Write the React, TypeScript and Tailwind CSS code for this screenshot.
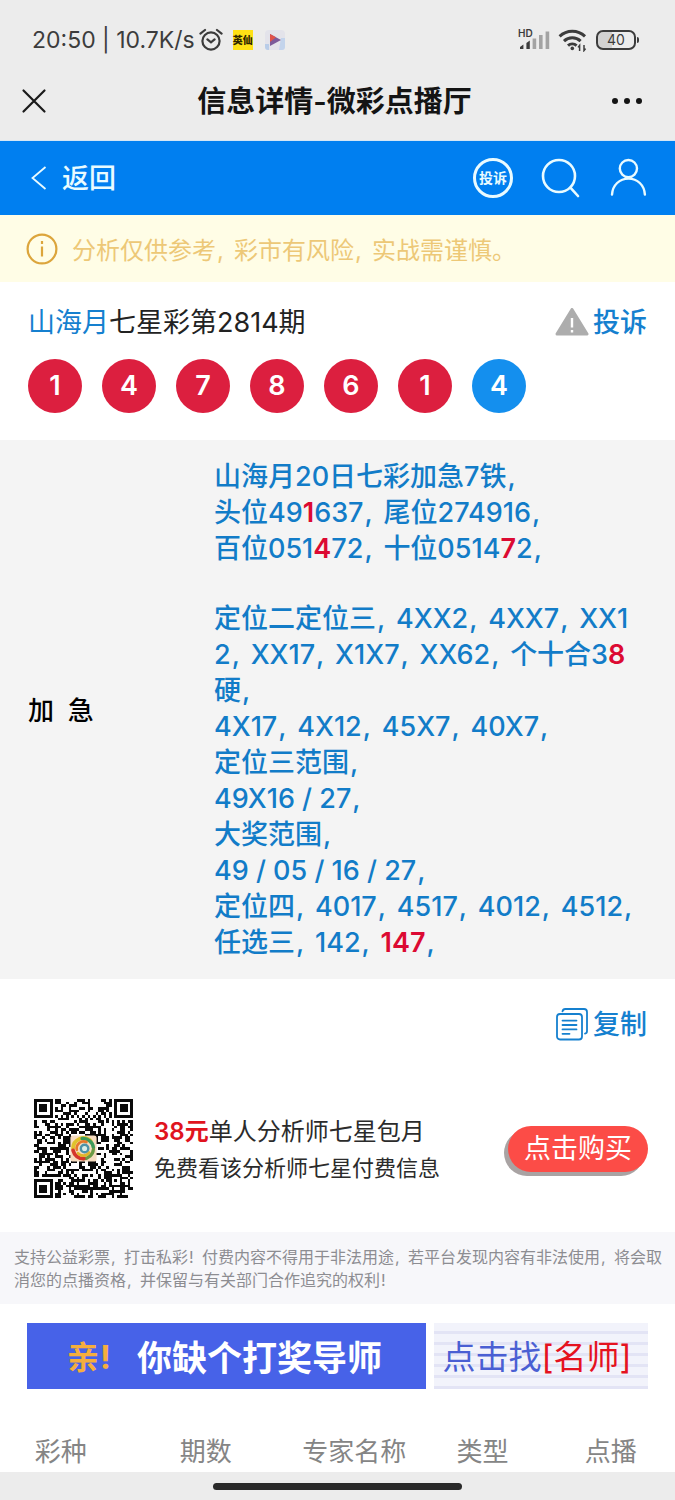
import React from 'react';

type Part = string | { hit: string };

// Each entry is one printed line, "hit" marks the winning digits
const forecast: Part[][] = [
    ['山海月20日七彩加急7铁,'],
    ['头位49', { hit: '1' }, '637,尾位274916,'],
    ['百位051', { hit: '4' }, '72,十位0514', { hit: '7' }, '2,'],
    [],
    ['定位二定位三,4XX2,4XX7,XX1'],
    ['2,XX17,X1X7,XX62,个十合3', { hit: '8' }],
    ['硬,'],
    ['4X17,4X12,45X7,40X7,'],
    ['定位三范围,'],
    ['49X16 / 27,'],
    ['大奖范围,'],
    ['49 / 05 / 16 / 27,'],
    ['定位四,4017,4517,4012,4512,'],
    ['任选三,142,', { hit: '147' }, ','],
];

const balls = [1, 4, 7, 8, 6, 1, 4];

const columns = [
    { label: '彩种', width: 'w-[18%]' },
    { label: '期数', width: 'w-[25%]' },
    { label: '专家名称', width: 'w-[19%]' },
    { label: '类型', width: 'w-[19%]' },
    { label: '点播', width: 'w-[19%]' },
];

interface TextProps {
    text: string;
    mark: string;
}

// Commas and exclamation marks get a fixed advance between the characters
const Text: React.FC<TextProps> = ({ text, mark }) => (
    <>
        {text.split(/([,!])/).map((piece, i) =>
            piece === ',' || piece === '!' ? (
                <span key={i} className={`inline-block pl-px whitespace-nowrap ${mark}`}>{piece}</span>
            ) : (
                piece
            )
        )}
    </>
);

const QR_SIZE = 37;

const finderModule = (x: number, y: number) => {
    const ring = Math.max(Math.abs(x - 3), Math.abs(y - 3));
    return ring === 3 || ring <= 1;
};

const buildQrPath = () => {
    let seed = 20814;
    let d = '';
    for (let y = 0; y < QR_SIZE; y++) {
        for (let x = 0; x < QR_SIZE; x++) {
            seed = (seed * 1103515245 + 12345) % 2147483648;
            let on = seed / 2147483648 > 0.48;
            const fx = x > 28 ? x - 30 : x;
            const fy = y > 28 ? y - 30 : y;
            const inFinder = fx <= 7 && fy <= 7 && !(x > 28 && y > 28);
            if (inFinder) {
                on = fx >= 0 && fy >= 0 && fx < 7 && fy < 7 && finderModule(fx, fy);
            } else if (x >= 28 && x <= 32 && y >= 28 && y <= 32) {
                const ring = Math.max(Math.abs(x - 30), Math.abs(y - 30));
                on = ring !== 1;
            } else if (x === 6 || y === 6) {
                on = (x + y) % 2 === 0;
            }
            if (on) d += `M${x} ${y}h1v1h-1z`;
        }
    }
    return d;
};

const qrPath = buildQrPath();

const QrCode = () => (
    <svg className="w-[99px] h-[99px] shrink-0" viewBox="0 0 37 37" role="img" aria-label="二维码">
        <path d={qrPath} fill="#0a0a0a" shapeRendering="crispEdges" />
        <rect x="13.6" y="13.6" width="9.8" height="9.8" rx="1" fill="#f6dcc0" />
        <g fill="none" strokeLinecap="round">
            <path d="M14.6 18.5a3.9 3.9 0 0 1 6.6-2.8" stroke="#e0c22c" strokeWidth="1.4" />
            <path d="M18 14.8a3.8 3.8 0 0 1 4.2 3.4" stroke="#3f9a5a" strokeWidth="1.3" />
            <path d="M22.2 18.8a3.8 3.8 0 0 1-3.8 3.5" stroke="#6b9a45" strokeWidth="1.2" />
            <path d="M14.6 19.2a4 4 0 0 0 4 3.1" stroke="#d5362b" strokeWidth="1.4" />
            <path d="M16 19a2.6 2.6 0 0 1 3.6-2.9" stroke="#e8792b" strokeWidth="1" />
            <path d="M16.4 20.2a2.6 2.6 0 0 0 4.2-.2" stroke="#e0b52c" strokeWidth="1" />
            <circle cx="18.9" cy="18.5" r="1.4" stroke="#4f93a8" strokeWidth=".9" fill="#dceee8" />
        </g>
    </svg>
);

const StatusBar = () => (
    <div className="flex items-center justify-between h-[70px] pl-8 pr-9 pt-2.5">
        <div className="flex items-center text-[#3c3c3c]">
            <span className="text-[23px]">20:50 | 10.7K/s</span>
            <svg className="w-6 h-6 ml-1" viewBox="0 0 24 24" fill="none" stroke="#3c3c3c" strokeWidth="2.2" strokeLinecap="round">
                <circle cx="12" cy="13" r="8.6" />
                <path d="M1.4 5.6L6 2M22.6 5.6L18 2M8.4 11.4l3.6 3 3.6-3" />
            </svg>
            <span className="flex items-center justify-center w-5 h-5 ml-2.5 bg-[#ffe115] text-[10px] font-black text-[#2c2500] whitespace-nowrap">英仙</span>
            <svg className="w-5 h-5 ml-3" viewBox="0 0 20 20">
                <rect width="20" height="20" rx="4" fill="#e3e3ea" />
                <path d="M0 14h4v6H3a3 3 0 0 1-3-3z" fill="#b9cde8" />
                <path d="M16 8h4v9a3 3 0 0 1-3 3h-3z" fill="#c3d4ec" />
                <path d="M5 4l11 6-11 6z" fill="#7c5a9a" />
                <path d="M5 4l6 3.3L5 12z" fill="#e0524a" />
            </svg>
        </div>
        <div className="flex items-center gap-2">
            <svg className="w-8 h-6" viewBox="0 0 32 24">
                <text x="0" y="9" fontSize="10" fontWeight="600" fill="#3c3c3c">HD</text>
                <path d="M2 21v-2l3.4-2.4V21zM8.4 21v-6l3.4-2.4V21z" fill="#3c3c3c" />
                <path d="M14.6 21V10.4h3.6V21zM21 21V7h3.6v14zM27.6 21V3.4h3.6V21z" fill="#a3a3a3" />
            </svg>
            <svg className="w-[30px] h-6" viewBox="0 0 30 24" fill="none" stroke="#3c3c3c" strokeWidth="3">
                <path d="M1.6 8.4a18.4 18.4 0 0 1 25.4 0" />
                <path d="M6 13.2a12 12 0 0 1 16.6 0" />
                <path d="M10 17.6a6.4 6.4 0 0 1 8.6 0" />
                <circle cx="14.3" cy="20.4" r="1.8" fill="#3c3c3c" stroke="none" />
                <path d="M21.6 23v-5.6l-1.6 2M26 17v5.6l1.6-2" strokeWidth="1.5" />
            </svg>
            <div className="flex items-center">
                <span className="flex items-center justify-center w-10 h-5 border-2 border-[#3c3c3c] rounded-[7px] bg-[linear-gradient(90deg,#d2d2d2_40%,transparent_40%)] text-sm text-[#3c3c3c]">40</span>
                <span className="w-0.5 h-1.5 ml-px rounded-r bg-[#3c3c3c]" />
            </div>
        </div>
    </div>
);

const TitleBar = () => (
    <div className="grid grid-cols-[74px_1fr_80px] items-center h-[71px] pb-2 px-5 border-b border-[#d4e6f5]">
        <button aria-label="关闭" className="justify-self-start">
            <svg className="w-7 h-7" viewBox="0 0 28 28" stroke="#1a1a1a" strokeWidth="2.2" strokeLinecap="round">
                <path d="M3.5 3.5l21 21M24.5 3.5l-21 21" />
            </svg>
        </button>
        <h1 className="pt-0.5 text-center text-[29px] font-semibold text-[#141414] whitespace-nowrap">信息详情-微彩点播厅</h1>
        <button aria-label="更多" className="justify-self-end pr-3">
            <svg className="w-8 h-7" viewBox="0 0 32 28" fill="#141414">
                <circle cx="4" cy="14" r="3" />
                <circle cx="16" cy="14" r="3" />
                <circle cx="28" cy="14" r="3" />
            </svg>
        </button>
    </div>
);

const NavBar = () => (
    <nav className="flex items-center justify-between h-[74px] pl-7 pr-[26px] bg-[#007ff0] text-[#e9fbff]">
        <a href="#back" className="flex items-center gap-3 text-[27px] font-medium">
            <svg className="w-[22px] h-7" viewBox="0 0 22 28" fill="none" stroke="currentColor" strokeWidth="1.8">
                <path d="M17.5 3L4.5 14l13 11" />
            </svg>
            <span className="pt-0.5">返回</span>
        </a>
        <div className="flex items-center gap-7">
            <a href="#complain" className="flex items-center justify-center w-10 h-10 border-[3px] border-current rounded-full text-sm font-bold whitespace-nowrap">投诉</a>
            <button aria-label="搜索">
                <svg className="block w-10 h-10" viewBox="0 0 40 40" fill="none" stroke="currentColor" strokeWidth="2.6" strokeLinecap="round">
                    <circle cx="18" cy="18" r="16" />
                    <path d="M29.4 29.6L37 38" />
                </svg>
            </button>
            <button aria-label="我的">
                <svg className="block w-10 h-10" viewBox="0 0 40 40" fill="none" stroke="currentColor" strokeWidth="2.4" strokeLinecap="round">
                    <circle cx="19.4" cy="10.6" r="8.6" />
                    <path d="M3 36.6c.6-9.6 7.6-16 16.5-16s15.8 6.4 16.4 16" />
                </svg>
            </button>
        </div>
    </nav>
);

export default function App() {
    return (
        <div className="min-h-screen bg-white font-['Inter','Noto_Sans_CJK_SC',sans-serif]">
            <header className="bg-[#ececec]">
                <StatusBar />
                <TitleBar />
            </header>
            <NavBar />

            {/* Risk notice */}
            <div className="flex items-center gap-3.5 h-[67px] px-[26px] bg-[#fffde6] text-2xl text-[#edc877]">
                <svg className="w-8 h-8" viewBox="0 0 32 32" fill="none" stroke="#dca53c" strokeWidth="2.2">
                    <circle cx="16" cy="16" r="14.4" />
                    <path d="M16 13.5v10M16 8v3" />
                </svg>
                <p className="pt-1"><Text text="分析仅供参考,彩市有风险,实战需谨慎。" mark="w-[18px]" /></p>
            </div>

            {/* Draw result */}
            <section className="px-7 pt-[21px] pb-[27px]">
                <div className="flex items-center justify-between h-10 text-[27px]">
                    <h2 className="text-[#222]"><a href="#expert" className="text-[#1580cf]">山海月</a>七星彩第2814期</h2>
                    <a href="#report" className="flex items-center gap-1 font-medium text-[#1580cf]">
                        <svg className="w-[34px] h-[30px]" viewBox="0 0 34 30">
                            <path d="M17 1.5L32 26H2z" fill="#adadad" stroke="#adadad" strokeWidth="3" strokeLinejoin="round" />
                            <path d="M17 10v9.5M17 22v2.6" stroke="#fff" strokeWidth="2.4" />
                        </svg>
                        投诉
                    </a>
                </div>
                <ul className="flex gap-5 mt-4">
                    {balls.map((n, i) => (
                        <li
                            key={i}
                            className={`flex items-center justify-center w-[54px] h-[54px] rounded-full text-[27px] font-semibold text-white ${i === balls.length - 1 ? 'bg-[#148fee]' : 'bg-[#dc1f3f]'
                                }`}
                        >
                            {n}
                        </li>
                    ))}
                </ul>
            </section>

            {/* Forecast */}
            <section className="flex items-center px-7 pt-[19px] pb-[18px] bg-[#f4f4f4] text-[27px]">
                <h3 className="w-[186px] shrink-0 text-[26px] font-medium text-black">加&nbsp; 急</h3>
                <div className="font-medium text-[#127cc8]">
                    {forecast.map((line, i) => (
                        <p key={i} className={`whitespace-nowrap leading-9 ${line.length ? 'h-9' : 'h-[34px]'}`}>
                            {line.map((part, j) =>
                                typeof part === 'string' ? (
                                    <Text key={j} text={part} mark="w-5" />
                                ) : (
                                    <b key={j} className="font-semibold text-[#dc0a32]">{part.hit}</b>
                                )
                            )}
                        </p>
                    ))}
                </div>
            </section>

            <div className="flex justify-end px-7 pt-[26px]">
                <button className="flex items-center gap-1 h-10 text-[27px] font-medium text-[#1580cf]">
                    <svg className="w-[34px] h-[34px]" viewBox="0 0 34 34" fill="none" stroke="currentColor" strokeWidth="1.8" strokeLinecap="round">
                        <rect x="2" y="6" width="25" height="25.5" rx="3" />
                        <path d="M7.5 3.4c.3-1.6 1.2-2.4 2.8-2.4H29c2 0 3 1 3 3v19c0 1.6-.6 2.4-2 2.6" />
                        <path d="M7.5 12.6h14M7.5 17h14M7.5 21.4h14M7.5 25.8h7" />
                    </svg>
                    复制
                </button>
            </div>

            {/* Monthly plan */}
            <section className="flex items-center gap-[21px] pl-[34px] pr-[27px] pt-[54px] pb-[34px] text-[#2b2b2b]">
                <QrCode />
                <div className="flex-1 pt-0.5">
                    <p className="text-2xl leading-[37px]"><b className="font-semibold text-[#e0141e]">38元</b>单人分析师七星包月</p>
                    <p className="text-[22px] leading-[37px]">免费看该分析师七星付费信息</p>
                </div>
                <button className="h-[46px] px-4 rounded-full bg-[#fc4c47] shadow-[-4px_4px_0_#a9a3a3] text-[27px] leading-none text-white">点击购买</button>
            </section>

            <p className="h-[72px] pl-3.5 pr-1.5 pt-[14px] bg-[#f7f7fa] text-base leading-[23px] text-[#8d8d92]">
                <Text text="支持公益彩票,打击私彩!付费内容不得用于非法用途,若平台发现内容有非法使用,将会取消您的点播资格,并保留与有关部门合作追究的权利!" mark="w-3.5" />
            </p>

            {/* Banner */}
            <a href="#masters" className="flex h-[66px] mx-[27px] mt-[19px] whitespace-nowrap">
                <span className="flex items-center justify-center gap-5 w-[399px] max-w-[65%] pt-1 pr-1 bg-[#4762e8] font-bold">
                    <span className="text-[32px] text-[#f5ae3d]"><Text text="亲!" mark="w-[18px]" /></span>
                    <span className="text-[35px] text-white">你缺个打奖导师</span>
                </span>
                <span className="flex items-center justify-center flex-1 ml-2 pt-1 pr-2 bg-[repeating-linear-gradient(180deg,#f2f3fb_0_8px,#e3e4f5_8px_11px)] text-[33px] text-[#4a5fd3]">
                    点击找<span className="text-[#e5121f]">[名师]</span>
                </span>
            </a>

            <table className="w-full mt-[42px] table-fixed text-[26px] text-[#858585]">
                <thead>
                    <tr>
                        {columns.map(c => (
                            <th key={c.label} className={`h-[41px] p-0 text-center font-normal leading-none ${c.width}`}>{c.label}</th>
                        ))}
                    </tr>
                </thead>
            </table>

            <footer className="flex justify-center h-7 pt-[11px] bg-[#ececec]">
                <div className="w-[37%] h-[7px] rounded-full bg-[#2a2a2a]" />
            </footer>
        </div>
    );
}
